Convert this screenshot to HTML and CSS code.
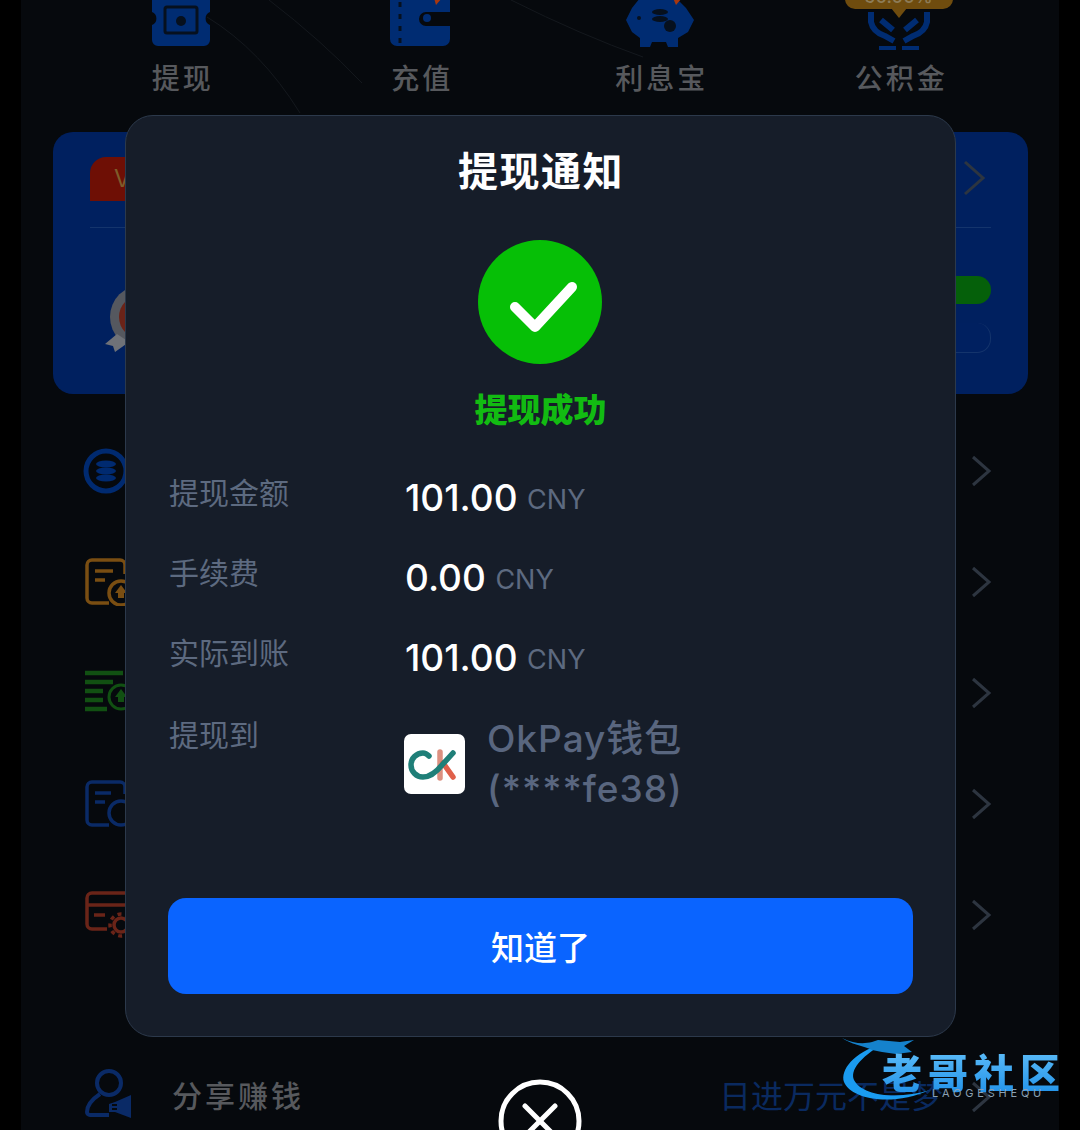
FILE: index.html
```html
<!DOCTYPE html>
<html>
	<head>
		<meta charset="utf-8">
		<title>提现通知</title>
		<link rel="stylesheet" href="styles.css">
	</head>
	<body>
		<div class="phone">
			<!-- 背景上的细线 -->
			<svg class="bg-lines" width="1038" height="130" viewBox="0 0 1038 130">
				<path d="M186 17Q240 50 279 113" />
				<path d="M248 0Q300 40 341 83" />
				<path d="M490 0Q560 35 622 57" />
			</svg>

			<div class="shortcuts">
				<div class="shortcut">
					<svg width="60" height="46" viewBox="0 0 60 46">
						<path fill="#002c72" d="M1-4H59V12a7 7 0 0 0 0 13V40a6 6 0 0 1-6 6H7a6 6 0 0 1-6-6V25a7 7 0 0 0 0-13Z" />
						<rect x="14" y="7" width="32" height="26" rx="2" fill="none" stroke="#06101e" stroke-width="3" />
						<circle cx="30" cy="21" r="5" fill="#06101e" />
					</svg>
					<span>提现</span>
				</div>
				<div class="shortcut">
					<svg width="60" height="46" viewBox="0 0 60 46">
						<path fill="#002c72" d="M0-4H60V12H36a7 7 0 0 0 0 14H60V39a7 7 0 0 1-7 7H7a7 7 0 0 1-7-7Z" />
						<circle cx="37" cy="18" r="4" fill="#002c72" />
						<path fill="none" stroke="#06101e" stroke-width="3" stroke-dasharray="5 7" d="M10 2V44" />
						<path fill="#a8380f" d="M44-2H52L46 5Z" />
					</svg>
					<span>充值</span>
				</div>
				<div class="shortcut">
					<svg width="68" height="46" viewBox="0 0 68 46">
						<path fill="#002c72" d="M14-2H50L60 8 68 20 62 32 52 38V47H42L40 42H26L24 47H14V38L6 32 0 20 6 8Z" />
						<ellipse cx="34" cy="12" rx="8" ry="3" fill="#06101e" />
						<ellipse cx="34" cy="19" rx="8" ry="3" fill="#06101e" />
						<circle cx="44" cy="26" r="6" fill="#06101e" />
						<circle cx="13" cy="18" r="2" fill="#06101e" />
						<path fill="#a8380f" d="M47-2H56L50 5Z" />
					</svg>
					<span>利息宝</span>
				</div>
				<div class="shortcut">
					<svg width="64" height="46" viewBox="0 0 64 46">
						<path fill="none" stroke="#002c72" stroke-width="6" d="M4 12V22Q6 32 18 36L27 41M60 12V22Q58 32 46 36L37 41" />
						<path fill="none" stroke="#002c72" stroke-width="6" d="M14 20 26 30M50 20 38 30" />
						<path stroke="#002c72" stroke-width="4" d="M12 48H29M35 48H52" />
					</svg>
					<span>公积金</span>
					<div class="bubble"><i>50.00%</i></div>
				</div>
			</div>

			<div class="vip-card">
				<div class="vip-top">
					<div class="vip-badge">V</div>
					<svg class="chevron" width="24" height="38" viewBox="0 0 24 38"><path d="M3 3 21 19 3 35" /></svg>
				</div>
				<div class="vip-bottom">
					<svg width="50" height="72" viewBox="0 0 50 72">
						<circle cx="37" cy="37" r="32" fill="#55585f" />
						<circle cx="36" cy="37" r="22" fill="#6b2318" />
						<path fill="#6f7278" d="M12 54 0 64 8 66 10 72 24 62Z" />
					</svg>
					<div class="vip-bars">
						<div class="pill pill-green"></div>
						<div class="pill pill-dark"></div>
					</div>
				</div>
			</div>

			<div class="menu">
				<div class="menu-row">
					<svg class="coin" width="46" height="48" viewBox="0 0 46 48">
						<circle cx="23" cy="24" r="20" fill="none" stroke="#002a70" stroke-width="5" />
						<ellipse cx="23" cy="17" rx="10" ry="3.5" fill="#002a70" />
						<ellipse cx="23" cy="24" rx="10" ry="3.5" fill="#002a70" />
						<ellipse cx="23" cy="31" rx="10" ry="3.5" fill="#002a70" />
					</svg>
					<svg class="chevron" width="22" height="34" viewBox="0 0 22 34"><path d="M3 3 19 17 3 31" /></svg>
				</div>
				<div class="menu-row">
					<svg width="46" height="48" viewBox="0 0 46 48" fill="none" stroke="#7a4e12" stroke-width="3.5">
						<path d="M24 45H7a5 5 0 0 1-5-5V7a5 5 0 0 1 5-5H35a5 5 0 0 1 5 5V16" />
						<path d="M10 13H28M10 22H20" />
						<circle cx="36" cy="35" r="12" />
						<path fill="#7a4e12" stroke="none" d="M36 27 42 35H39V40H33V35H30Z" />
					</svg>
					<svg class="chevron" width="22" height="34" viewBox="0 0 22 34"><path d="M3 3 19 17 3 31" /></svg>
				</div>
				<div class="menu-row">
					<svg width="46" height="48" viewBox="0 0 46 48" fill="none" stroke="#115012" stroke-width="4.5">
						<path d="M0 4H38M0 13H28M0 22H18M0 31H18M0 40H22" />
						<circle cx="36" cy="28" r="12" stroke-width="3" />
						<path fill="#115012" stroke="none" d="M36 20 42 28H39V33H33V28H30Z" />
					</svg>
					<svg class="chevron" width="22" height="34" viewBox="0 0 22 34"><path d="M3 3 19 17 3 31" /></svg>
				</div>
				<div class="menu-row">
					<svg width="46" height="48" viewBox="0 0 46 48" fill="none" stroke="#0a2a66" stroke-width="3.5">
						<path d="M24 45H7a5 5 0 0 1-5-5V7a5 5 0 0 1 5-5H35a5 5 0 0 1 5 5V14" />
						<path d="M10 13H26M10 22H20" />
						<circle cx="36" cy="33" r="12" />
					</svg>
					<svg class="chevron" width="22" height="34" viewBox="0 0 22 34"><path d="M3 3 19 17 3 31" /></svg>
				</div>
				<div class="menu-row">
					<svg width="46" height="48" viewBox="0 0 46 48" fill="none" stroke="#6a2418" stroke-width="3.5">
						<path d="M22 38H7a5 5 0 0 1-5-5V7a5 5 0 0 1 5-5H42M2 14H42M9 24H20" />
						<circle cx="36" cy="34" r="7" />
						<circle cx="36" cy="34" r="11" stroke-dasharray="4 4" />
					</svg>
					<svg class="chevron" width="22" height="34" viewBox="0 0 22 34"><path d="M3 3 19 17 3 31" /></svg>
				</div>
			</div>

			<div class="share-row">
				<svg width="50" height="52" viewBox="0 0 50 52" fill="none" stroke="#0a2a66" stroke-width="4">
					<circle cx="24" cy="15" r="12" />
					<path d="M15 26C6 32 2 38 2 44a3 3 0 0 0 3 3H24" />
					<path fill="#0a2a66" stroke="none" d="M30 34 46 27V50L30 44H24V36Z" />
					<path stroke="#06090d" stroke-width="2" d="M27 37H32M27 41H32" />
				</svg>
				<span class="share-name">分享赚钱</span>
				<span class="share-slogan">日进万元不是梦</span>
				<svg class="chevron" width="22" height="34" viewBox="0 0 22 34"><path d="M3 3 19 17 3 31" /></svg>
			</div>
		</div>

		<div class="modal">
			<h1>提现通知</h1>
			<svg class="ok-icon" width="124" height="124" viewBox="0 0 124 124">
				<circle cx="62" cy="62" r="62" fill="#06bf06" />
				<path d="M37 67 57 87 94 47" fill="none" stroke="#fff" stroke-width="10" stroke-linecap="round" stroke-linejoin="round" />
			</svg>
			<div class="ok-text">提现成功</div>

			<div class="info-row">
				<div class="info-label">提现金额</div>
				<div class="info-value"><b>101.00</b> <small>CNY</small></div>
			</div>
			<div class="info-row">
				<div class="info-label">手续费</div>
				<div class="info-value"><b>0.00</b> <small>CNY</small></div>
			</div>
			<div class="info-row">
				<div class="info-label">实际到账</div>
				<div class="info-value"><b>101.00</b> <small>CNY</small></div>
			</div>
			<div class="info-row wallet-row">
				<div class="info-label">提现到</div>
				<div class="wallet">
					<div class="wallet-logo">
						<svg width="61" height="60" viewBox="0 0 61 60" fill="none" stroke-width="5.5" stroke-linecap="round">
							<path d="M36 18V44" stroke="#dc9080" />
							<path d="M39 29 49 43" stroke="#e0604a" />
							<path d="M25 22Q22 19 19 19A12 12 0 0 0 19 43C28 43 34 36 38 31L49 19" stroke="#1f7f78" />
						</svg>
					</div>
					<div class="wallet-name">OkPay钱包<br>(****fe38)</div>
				</div>
			</div>

			<button class="ok-btn">知道了</button>
		</div>

		<div class="close-btn">
			<svg width="88" height="88" viewBox="0 0 88 88">
				<circle cx="44" cy="44" r="39" fill="none" stroke="#fff" stroke-width="5" />
				<path d="M29 29 59 59M59 29 29 59" stroke="#fff" stroke-width="5" stroke-linecap="round" />
			</svg>
		</div>

		<div class="watermark">
			<svg width="96" height="74" viewBox="0 0 96 74">
				<path d="M42 8C14 16 0 34 4 46 10 62 50 72 90 54 58 64 22 60 14 44 10 34 20 22 42 8Z" fill="#1a9bf0" />
				<path d="M2 2C14 8 24 8 32 6L38 4 60 6 74 4 64 10 72 16 56 18 42 16 32 14C24 10 10 8 2 2Z" fill="#1582cc" />
			</svg>
			<div class="mark-text">老哥社区</div>
			<div class="mark-sub">LAOGESHEQU</div>
		</div>
	</body>
</html>
```

FILE: styles.css
```css
* {
	box-sizing: border-box;
}

html,
body {
	margin: 0;
	padding: 0;
}

body {
	position: relative;
	width: 1080px;
	height: 1130px;
	overflow: hidden;
	background-color: #000;
	font-family: "Inter", "Noto Sans CJK SC", sans-serif;
}

.phone {
	position: relative;
	width: 1038px;
	height: 1130px;
	margin: 0 21px;
	overflow: hidden;
	background-color: #06090d;
}

.bg-lines {
	position: absolute;
	top: 0;
	left: 0;
}

.bg-lines path {
	fill: none;
	stroke: #14181d;
	stroke-width: 1;
}

/* 顶部四个入口 */
.shortcuts {
	position: relative;
	display: grid;
	grid-template-columns: repeat(4, 239.5px);
	height: 132px;
	padding-left: 40px;
}

.shortcut {
	position: relative;
	display: flex;
	flex-direction: column;
	align-items: center;
	color: #57595d;
	font-size: 28px;
	line-height: 40px;
	font-weight: 500;
}

.shortcut svg {
	flex: none;
	overflow: visible;
	margin-bottom: 13px;
}

.shortcut span {
	padding-left: 4px;
	letter-spacing: 3px;
}

.bubble {
	position: absolute;
	top: -22px;
	left: 65px;
	width: 108px;
	height: 31px;
	border-radius: 10px;
	background-color: #6f4c0e;
	color: #8d7c58;
	font-size: 18px;
	line-height: 38px;
	text-align: center;
}

.bubble i {
	font-style: normal;
}

.bubble::after {
	content: "";
	position: absolute;
	left: 46px;
	bottom: -9px;
	border-left: 8px solid transparent;
	border-right: 8px solid transparent;
	border-top: 10px solid #6f4c0e;
}

/* 蓝色会员卡 */
.vip-card {
	width: 975px;
	height: 262px;
	margin-left: 32px;
	padding: 25px 37px 0;
	border-radius: 20px;
	background-color: #00205f;
}

.vip-top {
	display: flex;
	justify-content: space-between;
	align-items: flex-start;
	height: 71px;
	border-bottom: 1px solid #14346c;
}

.vip-badge {
	width: 80px;
	height: 44px;
	padding-left: 24px;
	border-radius: 16px 16px 0 0;
	background-color: #6e0f05;
	color: #7e5c2a;
	font-size: 24px;
	line-height: 44px;
}

.vip-top .chevron {
	margin-right: 5px;
	margin-top: 2px;
}

.vip-bottom {
	display: flex;
	justify-content: space-between;
	padding-top: 52px;
	margin-left: 15px;
}

.vip-bars {
	display: flex;
	flex-direction: column;
	gap: 19px;
	width: 60px;
	margin-top: -4px;
}

.pill {
	height: 28px;
	border-radius: 0 14px 14px 0;
}

.pill-green {
	background-color: #05600a;
}

.pill-dark {
	height: 30px;
	border-right: 1px solid #14346c;
	border-bottom: 1px solid #14346c;
	background-color: #002060;
}

.chevron path {
	fill: none;
	stroke: #2d3540;
	stroke-width: 3;
}

/* 列表 */
.menu {
	display: flex;
	flex-direction: column;
	padding: 21px 67px 0 64px;
}

.menu-row {
	display: flex;
	justify-content: space-between;
	align-items: center;
	height: 111px;
}

.coin {
	margin-left: -2px;
}

.share-row {
	display: flex;
	align-items: center;
	height: 60px;
	margin-top: 94px;
	padding: 0 67px 0 64px;
}

.share-name {
	margin-left: 37px;
	color: #57595d;
	font-size: 30px;
	font-weight: 500;
	letter-spacing: 3px;
}

.share-slogan {
	margin-left: auto;
	margin-right: 27px;
	color: #0a2a60;
	font-size: 32px;
}

.share-row .chevron {
	margin-top: 6px;
}

/* 弹窗 */
.modal {
	position: absolute;
	top: 115px;
	left: 125px;
	display: flex;
	flex-direction: column;
	width: 831px;
	height: 922px;
	padding: 30px 42px 0;
	border: 1px solid #2c394b;
	border-radius: 28px;
	background-color: #161d29;
}

.modal h1 {
	margin: 0;
	padding-left: 1px;
	color: #fff;
	font-size: 40px;
	line-height: 52px;
	font-weight: 700;
	letter-spacing: 1.5px;
	text-align: center;
}

.ok-icon {
	flex: none;
	align-self: center;
	margin-top: 42px;
	margin-right: 1px;
}

.ok-text {
	margin-top: 22px;
	margin-bottom: 23px;
	color: #12bb12;
	font-size: 33px;
	line-height: 48px;
	font-weight: 900;
	text-align: center;
}

.info-row {
	display: flex;
	align-items: center;
	height: 80px;
}

.info-label {
	width: 237px;
	padding-left: 1px;
	padding-bottom: 12px;
	color: #5d6a80;
	font-size: 30px;
}

.info-value b {
	color: #fff;
	font-size: 37px;
	font-weight: 500;
}

.info-value small {
	margin-left: 5px;
	color: #5d6a80;
	font-size: 27px;
	vertical-align: 2px;
}

.wallet-row {
	align-items: flex-start;
	height: 160px;
}

.wallet-row .info-label {
	padding-top: 14px;
}

.wallet {
	display: flex;
	align-items: center;
	gap: 22px;
	margin-top: 17px;
}

.wallet-logo {
	width: 61px;
	height: 60px;
	border-radius: 7px;
	background-color: #fff;
	margin-left: -1px;
}

.wallet-logo svg {
	display: block;
}

.wallet-name {
	color: #59667f;
	font-size: 37px;
	line-height: 50px;
	font-weight: 500;
	letter-spacing: 1px;
}

.ok-btn {
	flex: none;
	width: 745px;
	height: 96px;
	margin-top: 41px;
	border: 0;
	border-radius: 18px;
	background-color: #0a64ff;
	color: #fff;
	font-family: inherit;
	font-size: 33px;
	font-weight: 500;
}

.close-btn {
	position: absolute;
	top: 1077px;
	left: 496px;
	width: 88px;
	height: 88px;
}

/* 水印 */
.watermark {
	position: absolute;
	top: 1036px;
	left: 840px;
	width: 230px;
	height: 74px;
}

.mark-text {
	position: absolute;
	top: 14px;
	left: 42px;
	background-image: linear-gradient(#5cbcf8, #1d8fe8);
	-webkit-background-clip: text;
	background-clip: text;
	color: transparent;
	font-size: 40px;
	line-height: 48px;
	font-weight: 900;
	letter-spacing: 6px;
	white-space: nowrap;
}

.mark-sub {
	position: absolute;
	top: 50px;
	left: 92px;
	color: #8aa0b4;
	font-size: 11px;
	letter-spacing: 3.8px;
	white-space: nowrap;
}
```
